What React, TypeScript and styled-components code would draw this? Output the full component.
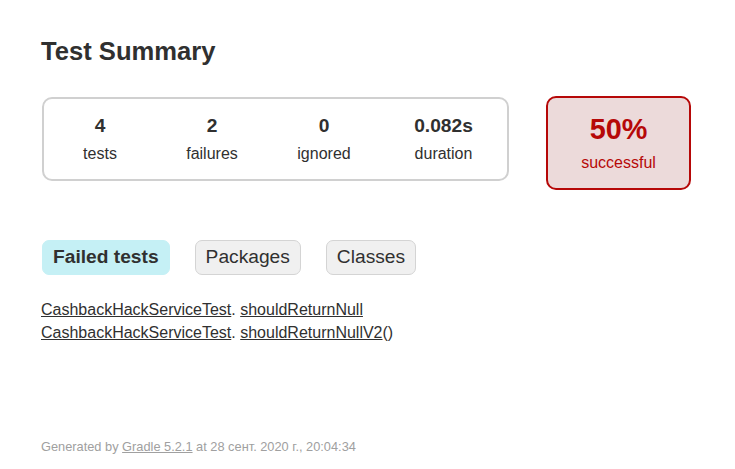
import React from "react";
import styled, { createGlobalStyle } from "styled-components";

const Global = createGlobalStyle`
  html, body { margin: 0; padding: 0; background: #ffffff; }
  body {
    font-family: "Liberation Sans", Arial, sans-serif;
    font-size: 16px;
    color: #303030;
  }
`;

const Content = styled.div`
  padding: 37px 41px 0 41px;
`;

const Title = styled.h1`
  margin: 0 0 30px 0;
  font-size: 25.6px;
  font-weight: bold;
  white-space: nowrap;
`;

const SummaryRow = styled.div`
  display: flex;
  align-items: flex-start;
  padding: 0 1px 1px 1px;
  margin-bottom: 39px;
`;

const SummaryGroup = styled.div`
  display: flex;
  margin-top: 1px;
  border: solid 2px #d0d0d0;
  border-radius: 10px;
`;

const InfoBox = styled.div<{ $wide?: boolean }>`
  width: ${(p) => (p.$wide ? 125 : 110)}px;
  margin: 0 1px;
  padding: 16px 0;
  text-align: center;
`;

const Counter = styled.div`
  font-size: 19.2px;
  font-weight: bold;
  margin-bottom: 8px;
`;

const Label = styled.p`
  margin: 0;
`;

const SuccessRate = styled.div`
  width: 141px;
  margin-left: 37px;
  padding: 15px 0 16px 0;
  text-align: center;
  border: solid 2px #b60808;
  border-radius: 10px;
  background-color: #ecdada;
  color: #b60808;
`;

const Percent = styled.div`
  font-size: 28.8px;
  font-weight: bold;
  margin-bottom: 8px;
`;

const TabList = styled.ul`
  display: flex;
  margin: 0;
  padding: 10px 0 10px 1px;
  list-style: none;
`;

const Tab = styled.li<{ $selected?: boolean }>`
  padding: 5px 10px 6px 10px;
  margin-right: 25px;
  border-radius: 7px;
  border: solid 1px ${(p) => (p.$selected ? "#c5f0f5" : "#d4d4d4")};
  background-color: ${(p) => (p.$selected ? "#c5f0f5" : "#f0f0f0")};
  font-size: 19.2px;
  font-weight: ${(p) => (p.$selected ? "bold" : "normal")};
  white-space: nowrap;
`;

const TabLink = styled.a`
  color: #303030;
  text-decoration: none;
  display: block;
`;

const LinkList = styled.ul`
  margin: 16px 0 0 0;
  padding: 0;
  list-style: none;
`;

const LinkItem = styled.li`
  margin-bottom: 5px;
  white-space: nowrap;
`;

const TestLink = styled.a`
  color: #303030;
  text-decoration: underline;
`;

const Footer = styled.div`
  margin-top: 97px;
  font-size: 12.8px;
  color: #a0a0a0;
  white-space: nowrap;
`;

const FooterLink = styled.a`
  color: #a0a0a0;
  text-decoration: underline;
`;

const counters = [
  { value: "4", label: "tests" },
  { value: "2", label: "failures" },
  { value: "0", label: "ignored" },
  { value: "0.082s", label: "duration", wide: true },
];

const failed = [
  { cls: "CashbackHackServiceTest", test: "shouldReturnNull", suffix: "" },
  { cls: "CashbackHackServiceTest", test: "shouldReturnNullV2", suffix: "()" },
];

export default function App() {
  return (
    <>
      <Global />
      <Content>
        <Title>Test Summary</Title>
        <SummaryRow>
          <SummaryGroup>
            {counters.map((c) => (
              <InfoBox key={c.label} $wide={c.wide}>
                <Counter>{c.value}</Counter>
                <Label>{c.label}</Label>
              </InfoBox>
            ))}
          </SummaryGroup>
          <SuccessRate>
            <Percent>50%</Percent>
            <Label>successful</Label>
          </SuccessRate>
        </SummaryRow>
        <TabList>
          <Tab $selected>
            <TabLink href="#tab0">Failed tests</TabLink>
          </Tab>
          <Tab>
            <TabLink href="#tab1">Packages</TabLink>
          </Tab>
          <Tab>
            <TabLink href="#tab2">Classes</TabLink>
          </Tab>
        </TabList>
        <LinkList>
          {failed.map((f, i) => (
            <LinkItem key={i}>
              <TestLink href="#">{f.cls}</TestLink>.{" "}
              <TestLink href="#">{f.test}</TestLink>
              {f.suffix}
            </LinkItem>
          ))}
        </LinkList>
        <Footer>
          Generated by <FooterLink href="#">Gradle 5.2.1</FooterLink> at 28 сент. 2020 г., 20:04:34
        </Footer>
      </Content>
    </>
  );
}
